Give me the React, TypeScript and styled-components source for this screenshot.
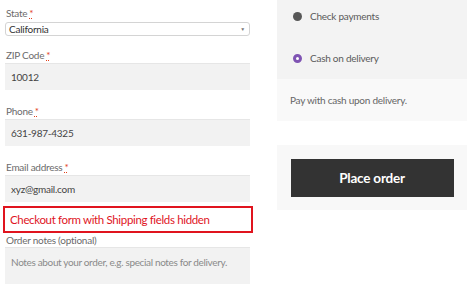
import React from "react";
import styled, { createGlobalStyle } from "styled-components";

const Global = createGlobalStyle`
  html, body { margin: 0; padding: 0; background: #fff; }
  body { font-family: "Lato", "Open Sans", sans-serif; width: 474px; height: 284px; overflow: hidden; }
  * { box-sizing: border-box; }
`;

const Page = styled.div`
  display: flex;
  align-items: flex-start;
  width: 474px;
  height: 284px;
  overflow: hidden;
`;

const LeftCol = styled.div`
  display: flex;
  flex-direction: column;
  width: 245px;
  margin-left: 5px;
`;

const Field = styled.div<{ $mb: number }>`
  display: flex;
  flex-direction: column;
  margin-bottom: ${(p) => p.$mb}px;
`;

const Label = styled.label<{ $h?: number; $mt?: number }>`
  display: block;
  font-size: 10px;
  letter-spacing: -0.25px;
  line-height: ${(p) => p.$h ?? 16}px;
  height: ${(p) => p.$h ?? 16}px;
  margin-top: ${(p) => p.$mt ?? 0}px;
  color: #6b6b6b;
  padding-left: 1px;
`;

const Req = styled.abbr`
  color: #e2401c;
  text-decoration: underline dotted;
  margin-left: 2px;
`;

const Select = styled.div`
  display: flex;
  align-items: center;
  justify-content: space-between;
  height: 14px;
  margin-top: 1px;
  border: 1px solid #d4d4d4;
  border-radius: 3px;
  background: #fff;
  padding: 0 4px 0 3px;
  font-size: 10px;
  letter-spacing: -0.25px;
  color: #333;
`;

const Arrow = styled.span`
  font-size: 5px;
  color: #777;
`;

const Input = styled.div`
  display: flex;
  align-items: center;
  height: 27px;
  background: #f2f2f2;
  border-top: 1px solid #e6e6e6;
  padding-left: 6px;
  font-size: 10px;
  letter-spacing: -0.25px;
  color: #444;
`;

const Notice = styled.div`
  width: 250px;
  margin-left: -2px;
  height: 27px;
  border: 2px solid #e0141e;
  display: flex;
  align-items: center;
  padding-left: 5px;
  font-size: 11.5px;
  letter-spacing: -0.35px;
  color: #e0141e;
`;

const TextArea = styled.div`
  position: relative;
  height: 45px;
  background: #f2f2f2;
  border-top: 1px solid #e6e6e6;
  padding: 8px 6px;
  font-size: 10px;
  letter-spacing: -0.35px;
  color: #8a8a8a;
`;

const Grip = styled.svg`
  position: absolute;
  right: 3px;
  bottom: 1px;
`;

const RightCol = styled.div`
  display: flex;
  flex-direction: column;
  width: 190px;
  margin-left: 27px;
`;

const Payment = styled.div`
  display: flex;
  flex-direction: column;
`;

const Methods = styled.div`
  background: #f3f3f3;
  height: 79px;
  display: flex;
  flex-direction: column;
  padding: 8px 0 0 16px;
  gap: 26px;
`;

const Method = styled.div`
  display: flex;
  align-items: center;
  gap: 8px;
  height: 16px;
  font-size: 10px;
  letter-spacing: -0.25px;
  color: #5a5a5a;
`;

const Radio = styled.span<{ $checked?: boolean }>`
  width: 9px;
  height: 9px;
  border-radius: 50%;
  background: ${(p) => (p.$checked ? "#fff" : "#575757")};
  border: ${(p) => (p.$checked ? "3px solid #7f54b3" : "none")};
`;

const Desc = styled.div`
  background: #f9f9f9;
  height: 42px;
  display: flex;
  align-items: center;
  padding-left: 13px;
  font-size: 10px;
  letter-spacing: -0.25px;
  color: #666;
`;

const OrderBox = styled.div`
  margin-top: 24px;
  height: 65px;
  background: #f8f8f8;
  display: flex;
  align-items: center;
  justify-content: center;
`;

const Button = styled.button`
  width: 163px;
  height: 38px;
  border: none;
  background: #333333;
  color: #fff;
  font-family: inherit;
  font-weight: 700;
  font-size: 13.5px;
  letter-spacing: -0.2px;
  cursor: pointer;
`;

export default function App() {
  return (
    <>
      <Global />
      <Page>
        <LeftCol>
          <Field $mb={11}>
            <Label $mt={5}>
              State<Req>*</Req>
            </Label>
            <Select>
              <span>California</span>
              <Arrow>▼</Arrow>
            </Select>
          </Field>
          <Field $mb={13}>
            <Label>
              ZIP Code<Req>*</Req>
            </Label>
            <Input>10012</Input>
          </Field>
          <Field $mb={13}>
            <Label>
              Phone<Req>*</Req>
            </Label>
            <Input>631-987-4325</Input>
          </Field>
          <Field $mb={4}>
            <Label>
              Email address<Req>*</Req>
            </Label>
            <Input>xyz@gmail.com</Input>
          </Field>
          <Notice>Checkout form with Shipping fields hidden</Notice>
          <Field $mb={0}>
            <Label $h={14}>Order notes (optional)</Label>
            <TextArea>
              Notes about your order, e.g. special notes for delivery.
              <Grip width="6" height="6" viewBox="0 0 6 6">
                <path d="M0 6 L6 0 M3 6 L6 3" stroke="#888" strokeWidth="0.8" />
              </Grip>
            </TextArea>
          </Field>
        </LeftCol>
        <RightCol>
          <Payment>
            <Methods>
              <Method>
                <Radio />
                Check payments
              </Method>
              <Method>
                <Radio $checked />
                Cash on delivery
              </Method>
            </Methods>
            <Desc>Pay with cash upon delivery.</Desc>
          </Payment>
          <OrderBox>
            <Button>Place order</Button>
          </OrderBox>
        </RightCol>
      </Page>
    </>
  );
}
